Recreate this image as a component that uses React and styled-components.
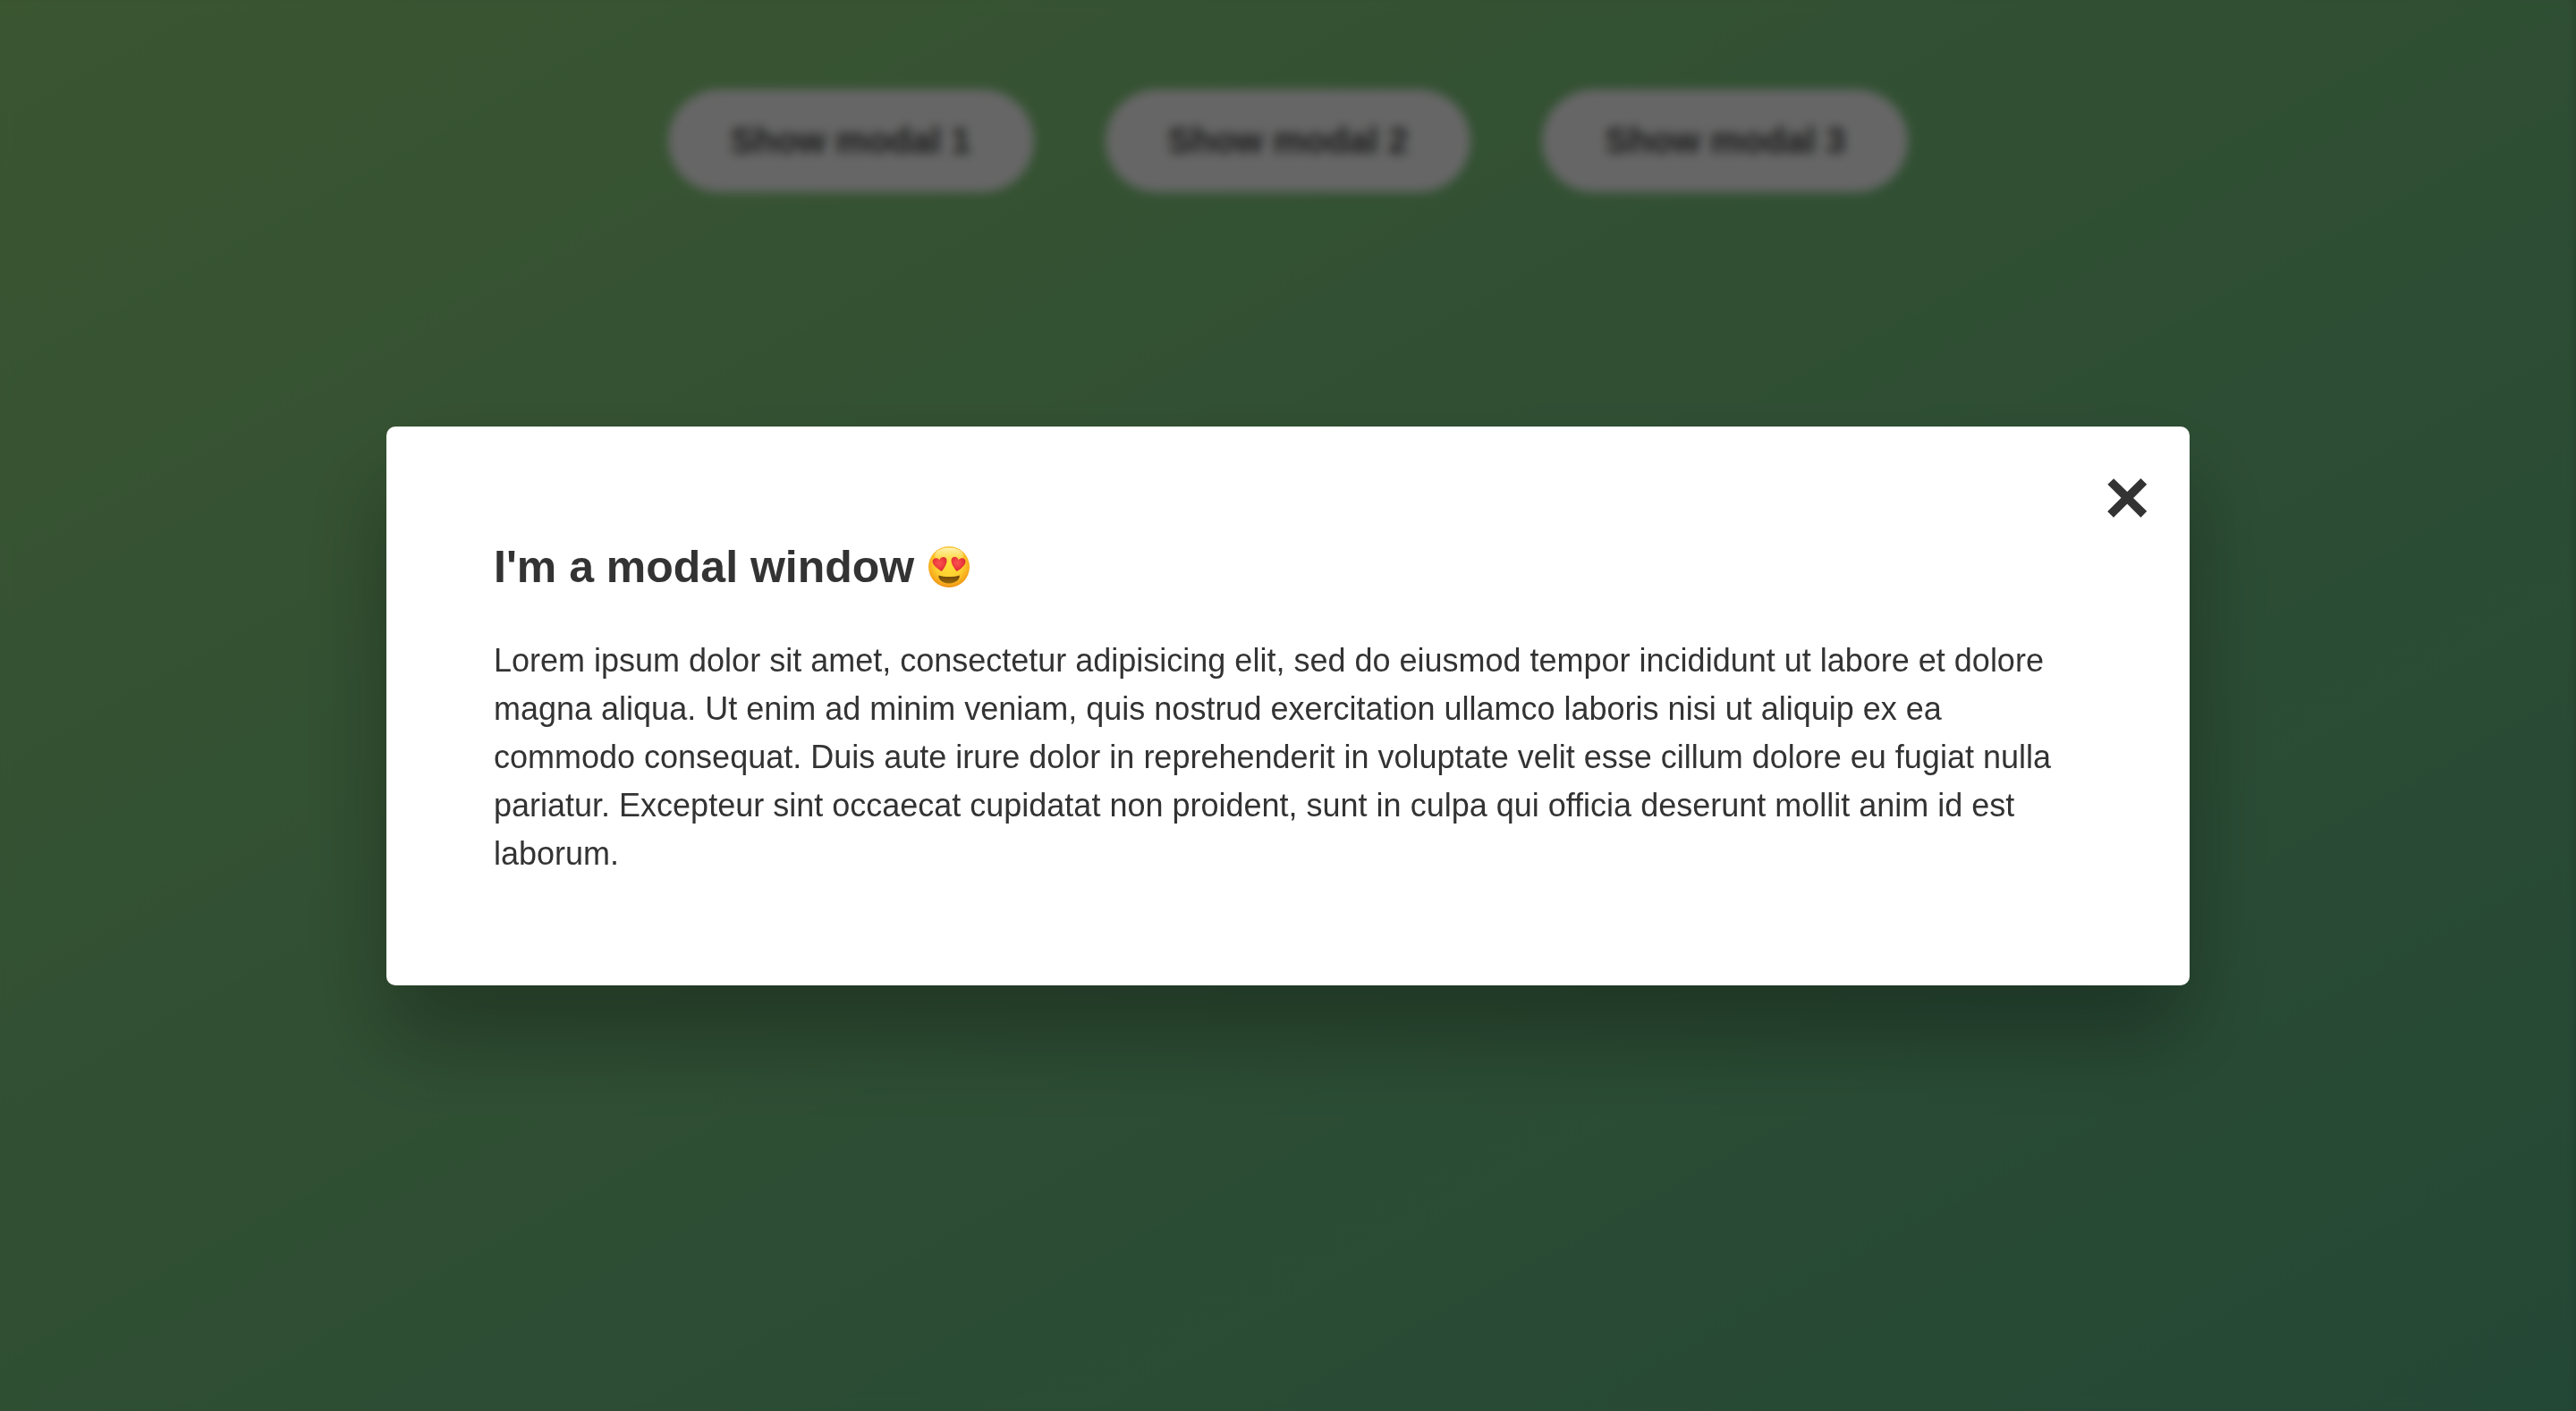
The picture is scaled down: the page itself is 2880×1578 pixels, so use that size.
import React, { useState } from 'react';
import styled, { createGlobalStyle } from 'styled-components';

const GlobalStyle = createGlobalStyle`
  * {
    margin: 0;
    padding: 0;
    box-sizing: border-box;
  }

  body {
    min-height: 100vh;
    font-family: 'Liberation Sans', Helvetica, Arial, sans-serif;
    font-size: 36px;
    line-height: 1.5;
    color: #333;
    background: linear-gradient(to top left, #5ab487, #93d57b) no-repeat fixed;
  }
`;

const Toolbar = styled.main`
  display: flex;
  justify-content: center;
  gap: 80px;
  padding: 100px 40px;
`;

const ShowButton = styled.button`
  padding: 35px 70px;
  border: none;
  border-radius: 200px;
  background: #fff;
  color: #444;
  font: 600 40px 'Liberation Sans', Helvetica, Arial, sans-serif;
  cursor: pointer;
`;

const Overlay = styled.div`
  position: fixed;
  inset: 0;
  display: grid;
  place-items: center;
  background: rgba(0, 0, 0, 0.6);
  backdrop-filter: blur(6px);
  box-shadow: inset -8px 0 12px -6px rgba(0, 0, 0, 0.15);
`;

const Dialog = styled.section`
  position: relative;
  width: 70%;
  padding: 120px;
  border-radius: 10px;
  background: #fff;
  box-shadow: 0 60px 100px rgba(0, 0, 0, 0.3);
`;

const CloseButton = styled.button`
  position: absolute;
  top: 28px;
  right: 44px;
  border: none;
  background: none;
  color: #333;
  font: 700 88px 'Liberation Sans', Helvetica, Arial, sans-serif;
  cursor: pointer;
`;

const Title = styled.h1`
  display: flex;
  align-items: center;
  gap: 16px;
  margin-bottom: 40px;
  font-size: 50px;
`;

const Emoji = styled.svg`
  width: 46px;
  height: 46px;
`;

const HEART =
  'M0 7.5C-4.500 4-8.200-.8-8.200-4.200C-8.200-8.600-2.400-9.600-.2-5.400C2-9.400 7.800-8.400 7.800-4.200C7.800-.8 4.500 4 0 7.500Z';

const HeartEyes = () => (
  <Emoji viewBox="0 0 46 46" role="img" aria-label="Smiling face with heart eyes">
    <defs>
      <radialGradient id="face" cx="50%" cy="42%" r="60%">
        <stop offset="0" stopColor="#ffe03a" />
        <stop offset="0.55" stopColor="#fdd030" />
        <stop offset="0.82" stopColor="#f8ad1e" />
        <stop offset="1" stopColor="#ea8a10" />
      </radialGradient>
      <linearGradient id="shine" x1="0" y1="0" x2="0" y2="1">
        <stop offset="0" stopColor="#fffbd0" stopOpacity="0.85" />
        <stop offset="1" stopColor="#fff08a" stopOpacity="0" />
      </linearGradient>
      <radialGradient id="heart" cx="45%" cy="40%" r="60%">
        <stop offset="0" stopColor="#f9544f" />
        <stop offset="0.6" stopColor="#ee3a3e" />
        <stop offset="1" stopColor="#cf2a30" />
      </radialGradient>
      <linearGradient id="mouth" x1="0" y1="0" x2="0" y2="1">
        <stop offset="0" stopColor="#6b4508" />
        <stop offset="1" stopColor="#9a6a0c" />
      </linearGradient>
    </defs>
    <circle cx="23" cy="23" r="23" fill="url(#face)" />
    <ellipse cx="23" cy="10" rx="16" ry="8.500" fill="url(#shine)" />
    <path d={HEART} transform="translate(13.500 20.500) rotate(-10)" fill="url(#heart)" />
    <path d={HEART} transform="translate(33 20.500) rotate(10)" fill="url(#heart)" />
    <path
      d="M11.500 32.600C18 34.600 28 34.600 34.700 32.600C35.600 37 30 41.600 23 41.600C16 41.600 10.600 37 11.500 32.600Z"
      fill="url(#mouth)"
    />
  </Emoji>
);

export default function App() {
  const [open, setOpen] = useState(true);

  return (
    <>
      <GlobalStyle />
      <Toolbar>
        {[1, 2, 3].map((n) => (
          <ShowButton key={n} type="button" onClick={() => setOpen(true)}>
            Show modal {n}
          </ShowButton>
        ))}
      </Toolbar>
      {open && (
        <Overlay>
          <Dialog role="dialog" aria-modal="true" aria-labelledby="modal-title">
            <CloseButton type="button" aria-label="Close" onClick={() => setOpen(false)}>
              &times;
            </CloseButton>
            <Title id="modal-title">
              I'm a modal window <HeartEyes />
            </Title>
            <p>
              Lorem ipsum dolor sit amet, consectetur adipisicing elit, sed do eiusmod tempor
              incididunt ut labore et dolore magna aliqua. Ut enim ad minim veniam, quis nostrud
              exercitation ullamco laboris nisi ut aliquip ex ea commodo consequat. Duis aute irure
              dolor in reprehenderit in voluptate velit esse cillum dolore eu fugiat nulla pariatur.
              Excepteur sint occaecat cupidatat non proident, sunt in culpa qui officia deserunt
              mollit anim id est laborum.
            </p>
          </Dialog>
        </Overlay>
      )}
    </>
  );
}
